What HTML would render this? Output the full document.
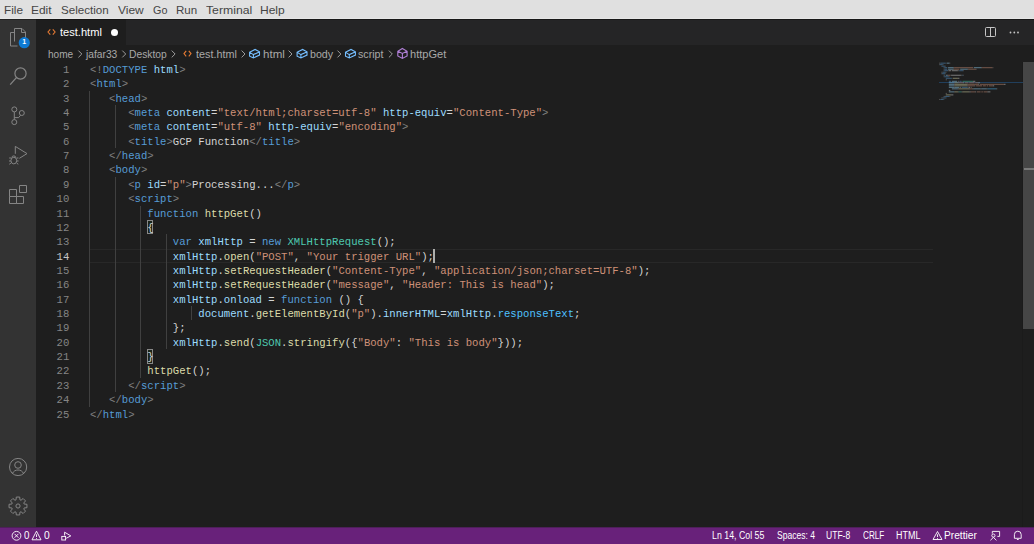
<!DOCTYPE html>
<html><head><meta charset="utf-8">
<style>
*{margin:0;padding:0;box-sizing:border-box}
html,body{width:1034px;height:544px;overflow:hidden;background:#1e1e1e;font-family:"Liberation Sans",sans-serif}
.abs{position:absolute}
#menubar{position:absolute;left:0;top:0;width:1034px;height:19px;background:#e0e0e0;box-shadow:inset 0 -1px 0 #e6e6e6}
#menubar span{position:absolute;top:3px;font-size:11.3px;color:#3e3e3e;white-space:pre;line-height:14px}
#activity{position:absolute;left:0;top:19px;width:36px;height:508px;background:#333333}
#tabs{position:absolute;left:36px;top:19px;width:998px;height:26px;background:#252526}
#tab{position:absolute;left:36px;top:19px;width:90px;height:26px;background:#1e1e1e}
#crumbs{position:absolute;left:36px;top:45px;width:998px;height:17px;background:#1e1e1e}
.ui{position:absolute;white-space:pre;font-family:"Liberation Sans",sans-serif}
.crumb{top:47px;font-size:10px;color:#a9a9a9;line-height:13px}
.sep{top:47px;font-size:10px;color:#a9a9a9;line-height:13px}
#editor{position:absolute;left:36px;top:62px;width:998px;height:465px;background:#1e1e1e}
.ln{position:absolute;white-space:pre;font-family:"Liberation Mono",monospace;font-size:10.624px;line-height:14.36px;height:14.36px}
.num{position:absolute;left:36px;width:33.3px;text-align:right;font-family:"Liberation Mono",monospace;font-size:10.624px;line-height:14.36px;color:#858585}
.num.cur{color:#c6c6c6}
.guide{position:absolute;width:1px;background:#404040}
#status{position:absolute;left:0;top:527px;width:1034px;height:17px;background:#68217a;border-top:1px solid #4e1f5a}
.st{position:absolute;top:529px;font-size:8.7px;color:#ffffff;white-space:pre;line-height:12px}
</style></head><body>
<div id="menubar">
</div>
<div id="activity">
<svg width="36" height="508" viewBox="0 19 36 508" style="position:absolute;left:0;top:0" fill="none" stroke="#858585" stroke-width="1">
 <path d="M14.5 41.5V28.5h7.5l3.5 3.5v9.5"/>
 <path d="M21.5 28.5v4h4"/>
 <path d="M14.5 32.5h-4v13.5h7"/>
 <circle cx="24.3" cy="42.7" r="5.6" fill="#0e7ad3" stroke="none"/>
 <circle cx="20.5" cy="73.5" r="5.6" stroke-width="1.2"/>
 <path d="M16.6 77.4L10.2 84.6" stroke-width="1.3"/>
 <circle cx="14.3" cy="109.4" r="2.5"/>
 <circle cx="14.3" cy="122.1" r="2.5"/>
 <circle cx="21.8" cy="113" r="2.5"/>
 <path d="M14.3 111.9v7.7M20.6 115.2L18.6 117.6H14.3"/>
 <path d="M15.3 153.8V146.4L27 153.6L19.4 158.3"/>
 <ellipse cx="13.8" cy="160.6" rx="2.9" ry="3.3"/>
 <path d="M11.9 157.6a1.9 1.7 0 0 1 3.8 0"/>
 <path d="M9.2 158h1.8M16.6 158h1.8M9 161h1.9M16.7 161h1.9M9.3 164.2l1.6-1M18.3 164.2l-1.6-1"/>
 <path d="M9.5 189.5h7v7h-7zM9.5 196.5h7v7h-7zM16.5 196.5h7v7h-7zM19.5 185.5h7v7h-7z"/>
 <circle cx="18.1" cy="467" r="8.6"/>
 <circle cx="18" cy="465" r="3.3"/>
 <path d="M12.3 473.6c1.3-2.6 3.3-3.6 5.7-3.6s4.4 1 5.7 3.6"/>
 <path d="M16.08 499.79 L16.28 497.06 L19.72 497.06 L19.92 499.79 L21.03 500.25 L23.10 498.47 L25.53 500.90 L23.75 502.97 L24.21 504.08 L26.94 504.28 L26.94 507.72 L24.21 507.92 L23.75 509.03 L25.53 511.10 L23.10 513.53 L21.03 511.75 L19.92 512.21 L19.72 514.94 L16.28 514.94 L16.08 512.21 L14.97 511.75 L12.90 513.53 L10.47 511.10 L12.25 509.03 L11.79 507.92 L9.06 507.72 L9.06 504.28 L11.79 504.08 L12.25 502.97 L10.47 500.90 L12.90 498.47 L14.97 500.25Z"/>
 <circle cx="18" cy="506" r="2.1"/>
</svg>
<div class="ui" style="left:20.3px;top:19px;width:8px;text-align:center;font-size:7px;font-weight:bold;color:#fff;line-height:8px">1</div>
</div>
<div id="tabs"></div>
<div id="tab"></div>
<svg class="abs" style="left:46px;top:27px" width="11" height="10" viewBox="0 0 11 10" fill="none" stroke="#e37933" stroke-width="1.1"><path d="M4.3 2.3L2 5L4.3 7.7M6.8 2.3L9.1 5L6.8 7.7"/></svg>
<div class="abs" style="left:111px;top:29px;width:7px;height:7px;border-radius:50%;background:#ffffff"></div>
<svg class="abs" style="left:985px;top:27px" width="11" height="10" viewBox="0 0 11 10" fill="none" stroke="#c5c5c5" stroke-width="1"><rect x="0.5" y="0.5" width="10" height="9" rx="1"/><path d="M5.5 0.5v9"/></svg>
<svg class="abs" style="left:1005px;top:28px" width="20" height="10" fill="#c5c5c5"><circle cx="5.5" cy="4.5" r="0.9"/><circle cx="9.3" cy="4.5" r="0.9"/><circle cx="13" cy="4.5" r="0.9"/></svg>
<div id="crumbs"></div>
<div class="abs" style="left:0;top:19px;width:1034px;height:1px;background:rgba(0,0,0,0.35)"></div>
<div id="editor"></div>
<svg class="abs" style="left:0;top:0" width="1034" height="70" fill="none">
<path d="M186.2 50.9L184 53.6L186.2 56.3M188.8 50.9L191 53.6L188.8 56.3" stroke="#e37933" stroke-width="1.1"/>
<path d="M78.40 50.6L81.80 54L78.40 57.4M122.30 50.6L125.70 54L122.30 57.4M171.70 50.6L175.10 54L171.70 57.4M241.60 50.6L245.00 54L241.60 57.4M288.60 50.6L292.00 54L288.60 57.4M337.50 50.6L340.90 54L337.50 57.4M388.90 50.6L392.30 54L388.90 57.4" stroke="#a9a9a9" stroke-width="0.9"/>
<path d="M249.60 52.30 L255.10 49.40 L259.50 51.80 L259.50 55.10 L253.40 57.90 L249.60 56.20Z M249.80 52.4L253.40 54.6L259.30 51.9 M253.40 54.6V57.8 M297.10 52.30 L302.60 49.40 L307.00 51.80 L307.00 55.10 L300.90 57.90 L297.10 56.20Z M297.30 52.4L300.90 54.6L306.80 51.9 M300.90 54.6V57.8 M345.50 52.30 L351.00 49.40 L355.40 51.80 L355.40 55.10 L349.30 57.90 L345.50 56.20Z M345.70 52.4L349.30 54.6L355.20 51.9 M349.30 54.6V57.8" stroke="#75beff" stroke-width="1.1"/>
<path d="M402.4 48.5L407.1 51.2V55.9L402.4 58.4L397.8 55.9V51.2Z M397.9 51.3L402.4 53.5L407 51.3M402.4 53.5V58.3" stroke="#b180d7" stroke-width="1.1"/>
</svg>

<div class="abs" style="left:90px;top:248.68px;width:843px;height:14.36px;border-top:1.5px solid #282828;border-bottom:1.5px solid #282828"></div>
<div class="abs" style="left:147px;top:219.96px;width:6px;height:14.36px;border:1px solid #888888;background:rgba(0,100,0,0.1)"></div>
<div class="abs" style="left:147px;top:349.2px;width:6px;height:14.36px;border:1px solid #888888;background:rgba(0,100,0,0.1)"></div>
<div class="abs" style="left:1022px;top:62px;width:1px;height:465px;background:#1b1b1b"></div>
<div class="abs" style="left:1023px;top:62px;width:11px;height:267px;background:#464646"></div>
<div class="abs" style="left:1024px;top:167.8px;width:10px;height:2px;background:#7a7a7a"></div>
<div class="abs" style="left:939px;top:81.6px;width:84px;height:1px;background:#213f5c"></div>
<div class="abs" style="left:433px;top:249px;width:2px;height:14px;background:#aeafad"></div>
<div class="guide" style="left:89.00px;top:90.72px;height:315.92px"></div>
<div class="guide" style="left:115.00px;top:105.08px;height:43.08px"></div>
<div class="guide" style="left:115.00px;top:176.88px;height:215.40px"></div>
<div class="guide" style="left:140.00px;top:205.60px;height:172.32px"></div>
<div class="guide" style="left:166.00px;top:234.32px;height:114.88px"></div>
<div class="guide" style="left:191.00px;top:306.12px;height:14.36px"></div>
<div class="ln" style="top:62.90px;left:90.00px"><span style="color:#808080">&lt;!</span><span style="color:#569cd6">DOCTYPE</span><span style="color:#d4d4d4"> </span><span style="color:#9cdcfe">html</span><span style="color:#808080">&gt;</span></div>
<div class="num" style="top:62.90px">1</div>
<div class="ln" style="top:77.26px;left:90.00px"><span style="color:#808080">&lt;</span><span style="color:#569cd6">html</span><span style="color:#808080">&gt;</span></div>
<div class="num" style="top:77.26px">2</div>
<div class="ln" style="top:91.62px;left:109.12px"><span style="color:#808080">&lt;</span><span style="color:#569cd6">head</span><span style="color:#808080">&gt;</span></div>
<div class="num" style="top:91.62px">3</div>
<div class="ln" style="top:105.98px;left:128.23px"><span style="color:#808080">&lt;</span><span style="color:#569cd6">meta</span><span style="color:#9cdcfe"> content</span><span style="color:#d4d4d4">=</span><span style="color:#ce9178">&quot;text/html;charset=utf-8&quot;</span><span style="color:#9cdcfe"> http-equiv</span><span style="color:#d4d4d4">=</span><span style="color:#ce9178">&quot;Content-Type&quot;</span><span style="color:#808080">&gt;</span></div>
<div class="num" style="top:105.98px">4</div>
<div class="ln" style="top:120.34px;left:128.23px"><span style="color:#808080">&lt;</span><span style="color:#569cd6">meta</span><span style="color:#9cdcfe"> content</span><span style="color:#d4d4d4">=</span><span style="color:#ce9178">&quot;utf-8&quot;</span><span style="color:#9cdcfe"> http-equiv</span><span style="color:#d4d4d4">=</span><span style="color:#ce9178">&quot;encoding&quot;</span><span style="color:#808080">&gt;</span></div>
<div class="num" style="top:120.34px">5</div>
<div class="ln" style="top:134.70px;left:128.23px"><span style="color:#808080">&lt;</span><span style="color:#569cd6">title</span><span style="color:#808080">&gt;</span><span style="color:#d4d4d4">GCP Function</span><span style="color:#808080">&lt;/</span><span style="color:#569cd6">title</span><span style="color:#808080">&gt;</span></div>
<div class="num" style="top:134.70px">6</div>
<div class="ln" style="top:149.06px;left:109.12px"><span style="color:#808080">&lt;/</span><span style="color:#569cd6">head</span><span style="color:#808080">&gt;</span></div>
<div class="num" style="top:149.06px">7</div>
<div class="ln" style="top:163.42px;left:109.12px"><span style="color:#808080">&lt;</span><span style="color:#569cd6">body</span><span style="color:#808080">&gt;</span></div>
<div class="num" style="top:163.42px">8</div>
<div class="ln" style="top:177.78px;left:128.23px"><span style="color:#808080">&lt;</span><span style="color:#569cd6">p</span><span style="color:#9cdcfe"> id</span><span style="color:#d4d4d4">=</span><span style="color:#ce9178">&quot;p&quot;</span><span style="color:#808080">&gt;</span><span style="color:#d4d4d4">Processing...</span><span style="color:#808080">&lt;/</span><span style="color:#569cd6">p</span><span style="color:#808080">&gt;</span></div>
<div class="num" style="top:177.78px">9</div>
<div class="ln" style="top:192.14px;left:128.23px"><span style="color:#808080">&lt;</span><span style="color:#569cd6">script</span><span style="color:#808080">&gt;</span></div>
<div class="num" style="top:192.14px">10</div>
<div class="ln" style="top:206.50px;left:147.35px"><span style="color:#569cd6">function</span><span style="color:#d4d4d4"> </span><span style="color:#dcdcaa">httpGet</span><span style="color:#d4d4d4">()</span></div>
<div class="num" style="top:206.50px">11</div>
<div class="ln" style="top:220.86px;left:147.35px"><span style="color:#d4d4d4">{</span></div>
<div class="num" style="top:220.86px">12</div>
<div class="ln" style="top:235.22px;left:172.84px"><span style="color:#569cd6">var</span><span style="color:#d4d4d4"> </span><span style="color:#9cdcfe">xmlHttp</span><span style="color:#d4d4d4"> = </span><span style="color:#569cd6">new</span><span style="color:#d4d4d4"> </span><span style="color:#4ec9b0">XMLHttpRequest</span><span style="color:#d4d4d4">();</span></div>
<div class="num" style="top:235.22px">13</div>
<div class="ln" style="top:249.58px;left:172.84px"><span style="color:#9cdcfe">xmlHttp</span><span style="color:#d4d4d4">.</span><span style="color:#dcdcaa">open</span><span style="color:#d4d4d4">(</span><span style="color:#ce9178">&quot;POST&quot;</span><span style="color:#d4d4d4">, </span><span style="color:#ce9178">&quot;Your trigger URL&quot;</span><span style="color:#d4d4d4">);</span></div>
<div class="num cur" style="top:249.58px">14</div>
<div class="ln" style="top:263.94px;left:172.84px"><span style="color:#9cdcfe">xmlHttp</span><span style="color:#d4d4d4">.</span><span style="color:#dcdcaa">setRequestHeader</span><span style="color:#d4d4d4">(</span><span style="color:#ce9178">&quot;Content-Type&quot;</span><span style="color:#d4d4d4">, </span><span style="color:#ce9178">&quot;application/json;charset=UTF-8&quot;</span><span style="color:#d4d4d4">);</span></div>
<div class="num" style="top:263.94px">15</div>
<div class="ln" style="top:278.30px;left:172.84px"><span style="color:#9cdcfe">xmlHttp</span><span style="color:#d4d4d4">.</span><span style="color:#dcdcaa">setRequestHeader</span><span style="color:#d4d4d4">(</span><span style="color:#ce9178">&quot;message&quot;</span><span style="color:#d4d4d4">, </span><span style="color:#ce9178">&quot;Header: This is head&quot;</span><span style="color:#d4d4d4">);</span></div>
<div class="num" style="top:278.30px">16</div>
<div class="ln" style="top:292.66px;left:172.84px"><span style="color:#9cdcfe">xmlHttp</span><span style="color:#d4d4d4">.</span><span style="color:#9cdcfe">onload</span><span style="color:#d4d4d4"> = </span><span style="color:#569cd6">function</span><span style="color:#d4d4d4"> () {</span></div>
<div class="num" style="top:292.66px">17</div>
<div class="ln" style="top:307.02px;left:198.32px"><span style="color:#9cdcfe">document</span><span style="color:#d4d4d4">.</span><span style="color:#dcdcaa">getElementById</span><span style="color:#d4d4d4">(</span><span style="color:#ce9178">&quot;p&quot;</span><span style="color:#d4d4d4">).</span><span style="color:#9cdcfe">innerHTML</span><span style="color:#d4d4d4">=</span><span style="color:#9cdcfe">xmlHttp</span><span style="color:#d4d4d4">.</span><span style="color:#4fc1ff">responseText</span><span style="color:#d4d4d4">;</span></div>
<div class="num" style="top:307.02px">18</div>
<div class="ln" style="top:321.38px;left:172.84px"><span style="color:#d4d4d4">};</span></div>
<div class="num" style="top:321.38px">19</div>
<div class="ln" style="top:335.74px;left:172.84px"><span style="color:#9cdcfe">xmlHttp</span><span style="color:#d4d4d4">.</span><span style="color:#dcdcaa">send</span><span style="color:#d4d4d4">(</span><span style="color:#4ec9b0">JSON</span><span style="color:#d4d4d4">.</span><span style="color:#dcdcaa">stringify</span><span style="color:#d4d4d4">({</span><span style="color:#ce9178">&quot;Body&quot;</span><span style="color:#d4d4d4">: </span><span style="color:#ce9178">&quot;This is body&quot;</span><span style="color:#d4d4d4">}));</span></div>
<div class="num" style="top:335.74px">20</div>
<div class="ln" style="top:350.10px;left:147.35px"><span style="color:#d4d4d4">}</span></div>
<div class="num" style="top:350.10px">21</div>
<div class="ln" style="top:364.46px;left:147.35px"><span style="color:#dcdcaa">httpGet</span><span style="color:#d4d4d4">();</span></div>
<div class="num" style="top:364.46px">22</div>
<div class="ln" style="top:378.82px;left:128.23px"><span style="color:#808080">&lt;/</span><span style="color:#569cd6">script</span><span style="color:#808080">&gt;</span></div>
<div class="num" style="top:378.82px">23</div>
<div class="ln" style="top:393.18px;left:109.12px"><span style="color:#808080">&lt;/</span><span style="color:#569cd6">body</span><span style="color:#808080">&gt;</span></div>
<div class="num" style="top:393.18px">24</div>
<div class="ln" style="top:407.54px;left:90.00px"><span style="color:#808080">&lt;/</span><span style="color:#569cd6">html</span><span style="color:#808080">&gt;</span></div>
<div class="num" style="top:407.54px">25</div>
<svg class="abs" style="left:0;top:0;opacity:0.5" width="1034" height="544">
<rect x="939.00" y="62.65" width="1.51" height="1.00" fill="#808080"/>
<rect x="940.51" y="62.65" width="5.29" height="1.00" fill="#569cd6"/>
<rect x="946.56" y="62.65" width="3.02" height="1.00" fill="#9cdcfe"/>
<rect x="949.58" y="62.65" width="0.76" height="1.00" fill="#808080"/>
<rect x="939.00" y="64.16" width="0.76" height="1.00" fill="#808080"/>
<rect x="939.76" y="64.16" width="3.02" height="1.00" fill="#569cd6"/>
<rect x="942.78" y="64.16" width="0.76" height="1.00" fill="#808080"/>
<rect x="941.27" y="65.67" width="0.76" height="1.00" fill="#808080"/>
<rect x="942.02" y="65.67" width="3.02" height="1.00" fill="#569cd6"/>
<rect x="945.05" y="65.67" width="0.76" height="1.00" fill="#808080"/>
<rect x="943.54" y="67.19" width="0.76" height="1.00" fill="#808080"/>
<rect x="944.29" y="67.19" width="3.02" height="1.00" fill="#569cd6"/>
<rect x="948.07" y="67.19" width="5.29" height="1.00" fill="#9cdcfe"/>
<rect x="953.36" y="67.19" width="0.76" height="1.00" fill="#d4d4d4"/>
<rect x="954.12" y="67.19" width="18.90" height="1.00" fill="#ce9178"/>
<rect x="973.78" y="67.19" width="7.56" height="1.00" fill="#9cdcfe"/>
<rect x="981.34" y="67.19" width="0.76" height="1.00" fill="#d4d4d4"/>
<rect x="982.09" y="67.19" width="10.58" height="1.00" fill="#ce9178"/>
<rect x="992.68" y="67.19" width="0.76" height="1.00" fill="#808080"/>
<rect x="943.54" y="68.70" width="0.76" height="1.00" fill="#808080"/>
<rect x="944.29" y="68.70" width="3.02" height="1.00" fill="#569cd6"/>
<rect x="948.07" y="68.70" width="5.29" height="1.00" fill="#9cdcfe"/>
<rect x="953.36" y="68.70" width="0.76" height="1.00" fill="#d4d4d4"/>
<rect x="954.12" y="68.70" width="5.29" height="1.00" fill="#ce9178"/>
<rect x="960.17" y="68.70" width="7.56" height="1.00" fill="#9cdcfe"/>
<rect x="967.73" y="68.70" width="0.76" height="1.00" fill="#d4d4d4"/>
<rect x="968.48" y="68.70" width="7.56" height="1.00" fill="#ce9178"/>
<rect x="976.04" y="68.70" width="0.76" height="1.00" fill="#808080"/>
<rect x="943.54" y="70.21" width="0.76" height="1.00" fill="#808080"/>
<rect x="944.29" y="70.21" width="3.78" height="1.00" fill="#569cd6"/>
<rect x="948.07" y="70.21" width="0.76" height="1.00" fill="#808080"/>
<rect x="948.83" y="70.21" width="2.27" height="1.00" fill="#d4d4d4"/>
<rect x="951.85" y="70.21" width="6.05" height="1.00" fill="#d4d4d4"/>
<rect x="957.90" y="70.21" width="1.51" height="1.00" fill="#808080"/>
<rect x="959.41" y="70.21" width="3.78" height="1.00" fill="#569cd6"/>
<rect x="963.19" y="70.21" width="0.76" height="1.00" fill="#808080"/>
<rect x="941.27" y="71.72" width="1.51" height="1.00" fill="#808080"/>
<rect x="942.78" y="71.72" width="3.02" height="1.00" fill="#569cd6"/>
<rect x="945.80" y="71.72" width="0.76" height="1.00" fill="#808080"/>
<rect x="941.27" y="73.23" width="0.76" height="1.00" fill="#808080"/>
<rect x="942.02" y="73.23" width="3.02" height="1.00" fill="#569cd6"/>
<rect x="945.05" y="73.23" width="0.76" height="1.00" fill="#808080"/>
<rect x="943.54" y="74.75" width="0.76" height="1.00" fill="#808080"/>
<rect x="944.29" y="74.75" width="0.76" height="1.00" fill="#569cd6"/>
<rect x="945.80" y="74.75" width="1.51" height="1.00" fill="#9cdcfe"/>
<rect x="947.32" y="74.75" width="0.76" height="1.00" fill="#d4d4d4"/>
<rect x="948.07" y="74.75" width="2.27" height="1.00" fill="#ce9178"/>
<rect x="950.34" y="74.75" width="0.76" height="1.00" fill="#808080"/>
<rect x="951.10" y="74.75" width="9.83" height="1.00" fill="#d4d4d4"/>
<rect x="960.92" y="74.75" width="1.51" height="1.00" fill="#808080"/>
<rect x="962.44" y="74.75" width="0.76" height="1.00" fill="#569cd6"/>
<rect x="963.19" y="74.75" width="0.76" height="1.00" fill="#808080"/>
<rect x="943.54" y="76.26" width="0.76" height="1.00" fill="#808080"/>
<rect x="944.29" y="76.26" width="4.54" height="1.00" fill="#569cd6"/>
<rect x="948.83" y="76.26" width="0.76" height="1.00" fill="#808080"/>
<rect x="945.80" y="77.77" width="6.05" height="1.00" fill="#569cd6"/>
<rect x="952.61" y="77.77" width="5.29" height="1.00" fill="#dcdcaa"/>
<rect x="957.90" y="77.77" width="1.51" height="1.00" fill="#d4d4d4"/>
<rect x="945.80" y="79.28" width="0.76" height="1.00" fill="#d4d4d4"/>
<rect x="948.83" y="80.79" width="2.27" height="1.00" fill="#569cd6"/>
<rect x="951.85" y="80.79" width="5.29" height="1.00" fill="#9cdcfe"/>
<rect x="957.90" y="80.79" width="0.76" height="1.00" fill="#d4d4d4"/>
<rect x="959.41" y="80.79" width="2.27" height="1.00" fill="#569cd6"/>
<rect x="962.44" y="80.79" width="10.58" height="1.00" fill="#4ec9b0"/>
<rect x="973.02" y="80.79" width="2.27" height="1.00" fill="#d4d4d4"/>
<rect x="948.83" y="82.31" width="5.29" height="1.00" fill="#9cdcfe"/>
<rect x="954.12" y="82.31" width="0.76" height="1.00" fill="#d4d4d4"/>
<rect x="954.88" y="82.31" width="3.02" height="1.00" fill="#dcdcaa"/>
<rect x="957.90" y="82.31" width="0.76" height="1.00" fill="#d4d4d4"/>
<rect x="958.66" y="82.31" width="4.54" height="1.00" fill="#ce9178"/>
<rect x="963.19" y="82.31" width="0.76" height="1.00" fill="#d4d4d4"/>
<rect x="964.70" y="82.31" width="3.78" height="1.00" fill="#ce9178"/>
<rect x="969.24" y="82.31" width="5.29" height="1.00" fill="#ce9178"/>
<rect x="975.29" y="82.31" width="3.02" height="1.00" fill="#ce9178"/>
<rect x="978.31" y="82.31" width="1.51" height="1.00" fill="#d4d4d4"/>
<rect x="948.83" y="83.82" width="5.29" height="1.00" fill="#9cdcfe"/>
<rect x="954.12" y="83.82" width="0.76" height="1.00" fill="#d4d4d4"/>
<rect x="954.88" y="83.82" width="12.10" height="1.00" fill="#dcdcaa"/>
<rect x="966.97" y="83.82" width="0.76" height="1.00" fill="#d4d4d4"/>
<rect x="967.73" y="83.82" width="10.58" height="1.00" fill="#ce9178"/>
<rect x="978.31" y="83.82" width="0.76" height="1.00" fill="#d4d4d4"/>
<rect x="979.82" y="83.82" width="24.19" height="1.00" fill="#ce9178"/>
<rect x="1004.02" y="83.82" width="1.51" height="1.00" fill="#d4d4d4"/>
<rect x="948.83" y="85.33" width="5.29" height="1.00" fill="#9cdcfe"/>
<rect x="954.12" y="85.33" width="0.76" height="1.00" fill="#d4d4d4"/>
<rect x="954.88" y="85.33" width="12.10" height="1.00" fill="#dcdcaa"/>
<rect x="966.97" y="85.33" width="0.76" height="1.00" fill="#d4d4d4"/>
<rect x="967.73" y="85.33" width="6.80" height="1.00" fill="#ce9178"/>
<rect x="974.53" y="85.33" width="0.76" height="1.00" fill="#d4d4d4"/>
<rect x="976.04" y="85.33" width="6.05" height="1.00" fill="#ce9178"/>
<rect x="982.85" y="85.33" width="3.02" height="1.00" fill="#ce9178"/>
<rect x="986.63" y="85.33" width="1.51" height="1.00" fill="#ce9178"/>
<rect x="988.90" y="85.33" width="3.78" height="1.00" fill="#ce9178"/>
<rect x="992.68" y="85.33" width="1.51" height="1.00" fill="#d4d4d4"/>
<rect x="948.83" y="86.84" width="5.29" height="1.00" fill="#9cdcfe"/>
<rect x="954.12" y="86.84" width="0.76" height="1.00" fill="#d4d4d4"/>
<rect x="954.88" y="86.84" width="4.54" height="1.00" fill="#9cdcfe"/>
<rect x="960.17" y="86.84" width="0.76" height="1.00" fill="#d4d4d4"/>
<rect x="961.68" y="86.84" width="6.05" height="1.00" fill="#569cd6"/>
<rect x="968.48" y="86.84" width="1.51" height="1.00" fill="#d4d4d4"/>
<rect x="970.75" y="86.84" width="0.76" height="1.00" fill="#d4d4d4"/>
<rect x="951.85" y="88.35" width="6.05" height="1.00" fill="#9cdcfe"/>
<rect x="957.90" y="88.35" width="0.76" height="1.00" fill="#d4d4d4"/>
<rect x="958.66" y="88.35" width="10.58" height="1.00" fill="#dcdcaa"/>
<rect x="969.24" y="88.35" width="0.76" height="1.00" fill="#d4d4d4"/>
<rect x="970.00" y="88.35" width="2.27" height="1.00" fill="#ce9178"/>
<rect x="972.26" y="88.35" width="1.51" height="1.00" fill="#d4d4d4"/>
<rect x="973.78" y="88.35" width="6.80" height="1.00" fill="#9cdcfe"/>
<rect x="980.58" y="88.35" width="0.76" height="1.00" fill="#d4d4d4"/>
<rect x="981.34" y="88.35" width="5.29" height="1.00" fill="#9cdcfe"/>
<rect x="986.63" y="88.35" width="0.76" height="1.00" fill="#d4d4d4"/>
<rect x="987.38" y="88.35" width="9.07" height="1.00" fill="#4fc1ff"/>
<rect x="996.46" y="88.35" width="0.76" height="1.00" fill="#d4d4d4"/>
<rect x="948.83" y="89.87" width="1.51" height="1.00" fill="#d4d4d4"/>
<rect x="948.83" y="91.38" width="5.29" height="1.00" fill="#9cdcfe"/>
<rect x="954.12" y="91.38" width="0.76" height="1.00" fill="#d4d4d4"/>
<rect x="954.88" y="91.38" width="3.02" height="1.00" fill="#dcdcaa"/>
<rect x="957.90" y="91.38" width="0.76" height="1.00" fill="#d4d4d4"/>
<rect x="958.66" y="91.38" width="3.02" height="1.00" fill="#4ec9b0"/>
<rect x="961.68" y="91.38" width="0.76" height="1.00" fill="#d4d4d4"/>
<rect x="962.44" y="91.38" width="6.80" height="1.00" fill="#dcdcaa"/>
<rect x="969.24" y="91.38" width="1.51" height="1.00" fill="#d4d4d4"/>
<rect x="970.75" y="91.38" width="4.54" height="1.00" fill="#ce9178"/>
<rect x="975.29" y="91.38" width="0.76" height="1.00" fill="#d4d4d4"/>
<rect x="976.80" y="91.38" width="3.78" height="1.00" fill="#ce9178"/>
<rect x="981.34" y="91.38" width="1.51" height="1.00" fill="#ce9178"/>
<rect x="983.60" y="91.38" width="3.78" height="1.00" fill="#ce9178"/>
<rect x="987.38" y="91.38" width="3.02" height="1.00" fill="#d4d4d4"/>
<rect x="945.80" y="92.89" width="0.76" height="1.00" fill="#d4d4d4"/>
<rect x="945.80" y="94.40" width="5.29" height="1.00" fill="#dcdcaa"/>
<rect x="951.10" y="94.40" width="2.27" height="1.00" fill="#d4d4d4"/>
<rect x="943.54" y="95.91" width="1.51" height="1.00" fill="#808080"/>
<rect x="945.05" y="95.91" width="4.54" height="1.00" fill="#569cd6"/>
<rect x="949.58" y="95.91" width="0.76" height="1.00" fill="#808080"/>
<rect x="941.27" y="97.43" width="1.51" height="1.00" fill="#808080"/>
<rect x="942.78" y="97.43" width="3.02" height="1.00" fill="#569cd6"/>
<rect x="945.80" y="97.43" width="0.76" height="1.00" fill="#808080"/>
<rect x="939.00" y="98.94" width="1.51" height="1.00" fill="#808080"/>
<rect x="940.51" y="98.94" width="3.02" height="1.00" fill="#569cd6"/>
<rect x="943.54" y="98.94" width="0.76" height="1.00" fill="#808080"/>
</svg>
<div id="status"></div>
<svg class="abs" style="left:0;top:527px" width="1034" height="17" fill="none" stroke="#ffffff" stroke-width="0.9">
<circle cx="16.5" cy="8.8" r="4.4"/>
<path d="M14.6 6.9L18.4 10.7M18.4 6.9L14.6 10.7"/>
<path d="M36.5 4.2L41 12.8H32Z"/>
<path d="M36.5 7.3V10M36.5 11v0.8"/>
<path d="M64.6 5.2L70.8 8.9L66.2 11.3M64.6 5.2V8.5"/>
<rect x="61.8" y="9.4" width="3.8" height="3.6"/>
<path d="M937.5 4.5L942 12.5H933Z"/>
<path d="M937.5 7.3V10M937.5 11v0.8"/>
<path d="M992.3 6.6V4.4h7.3v5h-2.2"/>
<circle cx="993.4" cy="8.6" r="1.6"/>
<path d="M990.4 13.3L993.4 10.4L996.4 13.3"/>
<path d="M1014.4 11.3V7.6a3.4 3.4 0 0 1 6.8 0V11.3ZM1016.9 12.5h1.8"/>
</svg>

<div id="m1" class="ui" style="left:3.96px;top:5.27px;font-size:11.50px;line-height:11.50px;color:#454545;transform:scaleX(1.0235);transform-origin:0 0">File</div>
<div id="m2" class="ui" style="left:31.25px;top:5.27px;font-size:11.50px;line-height:11.50px;color:#454545;transform:scaleX(1.0381);transform-origin:0 0">Edit</div>
<div id="m3" class="ui" style="left:61.33px;top:5.27px;font-size:11.50px;line-height:11.50px;color:#454545;transform:scaleX(1.0059);transform-origin:0 0">Selection</div>
<div id="m4" class="ui" style="left:117.51px;top:5.27px;font-size:11.50px;line-height:11.50px;color:#454545;transform:scaleX(1.0428);transform-origin:0 0">View</div>
<div id="m5" class="ui" style="left:152.68px;top:5.27px;font-size:11.50px;line-height:11.50px;color:#454545;transform:scaleX(0.9394);transform-origin:0 0">Go</div>
<div id="m6" class="ui" style="left:176.09px;top:5.27px;font-size:11.50px;line-height:11.50px;color:#454545;transform:scaleX(1.0040);transform-origin:0 0">Run</div>
<div id="m7" class="ui" style="left:205.75px;top:5.27px;font-size:11.50px;line-height:11.50px;color:#454545;transform:scaleX(1.0635);transform-origin:0 0">Terminal</div>
<div id="m8" class="ui" style="left:259.92px;top:5.27px;font-size:11.50px;line-height:11.50px;color:#454545;transform:scaleX(1.0455);transform-origin:0 0">Help</div>
<div id="t1" class="ui" style="left:60.12px;top:27.43px;font-size:11.30px;line-height:11.30px;color:#ffffff;transform:scaleX(0.9802);transform-origin:0 0">test.html</div>
<div id="b1" class="ui" style="left:48.24px;top:48.86px;font-size:10.80px;line-height:10.80px;color:#a9a9a9;transform:scaleX(0.9310);transform-origin:0 0">home</div>
<div id="b2" class="ui" style="left:86.49px;top:48.86px;font-size:10.80px;line-height:10.80px;color:#a9a9a9;transform:scaleX(0.9482);transform-origin:0 0">jafar33</div>
<div id="b3" class="ui" style="left:129.07px;top:48.86px;font-size:10.80px;line-height:10.80px;color:#a9a9a9;transform:scaleX(0.9536);transform-origin:0 0">Desktop</div>
<div id="b4" class="ui" style="left:196.19px;top:48.86px;font-size:10.80px;line-height:10.80px;color:#a9a9a9;transform:scaleX(1.0014);transform-origin:0 0">test.html</div>
<div id="b5" class="ui" style="left:262.95px;top:48.86px;font-size:10.80px;line-height:10.80px;color:#a9a9a9;transform:scaleX(1.0700);transform-origin:0 0">html</div>
<div id="b6" class="ui" style="left:309.67px;top:48.86px;font-size:10.80px;line-height:10.80px;color:#a9a9a9;transform:scaleX(0.9869);transform-origin:0 0">body</div>
<div id="b7" class="ui" style="left:358.40px;top:48.86px;font-size:10.80px;line-height:10.80px;color:#a9a9a9;transform:scaleX(0.9869);transform-origin:0 0">script</div>
<div id="b8" class="ui" style="left:410.06px;top:48.86px;font-size:10.80px;line-height:10.80px;color:#a9a9a9;transform:scaleX(1.0249);transform-origin:0 0">httpGet</div>
<div id="s1" class="ui" style="left:712.07px;top:530.53px;font-size:10.00px;line-height:10.00px;color:#ffffff;transform:scaleX(0.8801);transform-origin:0 0">Ln 14, Col 55</div>
<div id="s2" class="ui" style="left:776.85px;top:530.53px;font-size:10.00px;line-height:10.00px;color:#ffffff;transform:scaleX(0.8552);transform-origin:0 0">Spaces: 4</div>
<div id="s3" class="ui" style="left:826.09px;top:530.53px;font-size:10.00px;line-height:10.00px;color:#ffffff;transform:scaleX(0.8534);transform-origin:0 0">UTF-8</div>
<div id="s4" class="ui" style="left:862.62px;top:530.53px;font-size:10.00px;line-height:10.00px;color:#ffffff;transform:scaleX(0.8167);transform-origin:0 0">CRLF</div>
<div id="s5" class="ui" style="left:895.51px;top:530.53px;font-size:10.00px;line-height:10.00px;color:#ffffff;transform:scaleX(0.8959);transform-origin:0 0">HTML</div>
<div id="s6" class="ui" style="left:944.01px;top:530.53px;font-size:10.00px;line-height:10.00px;color:#ffffff;transform:scaleX(1.0193);transform-origin:0 0">Prettier</div>
<div id="s7" class="ui" style="left:23.89px;top:530.53px;font-size:10.00px;line-height:10.00px;color:#ffffff;transform:scaleX(0.9732);transform-origin:0 0">0</div>
<div id="s8" class="ui" style="left:43.80px;top:530.53px;font-size:10.00px;line-height:10.00px;color:#ffffff;transform:scaleX(1.0238);transform-origin:0 0">0</div>
</body></html>
